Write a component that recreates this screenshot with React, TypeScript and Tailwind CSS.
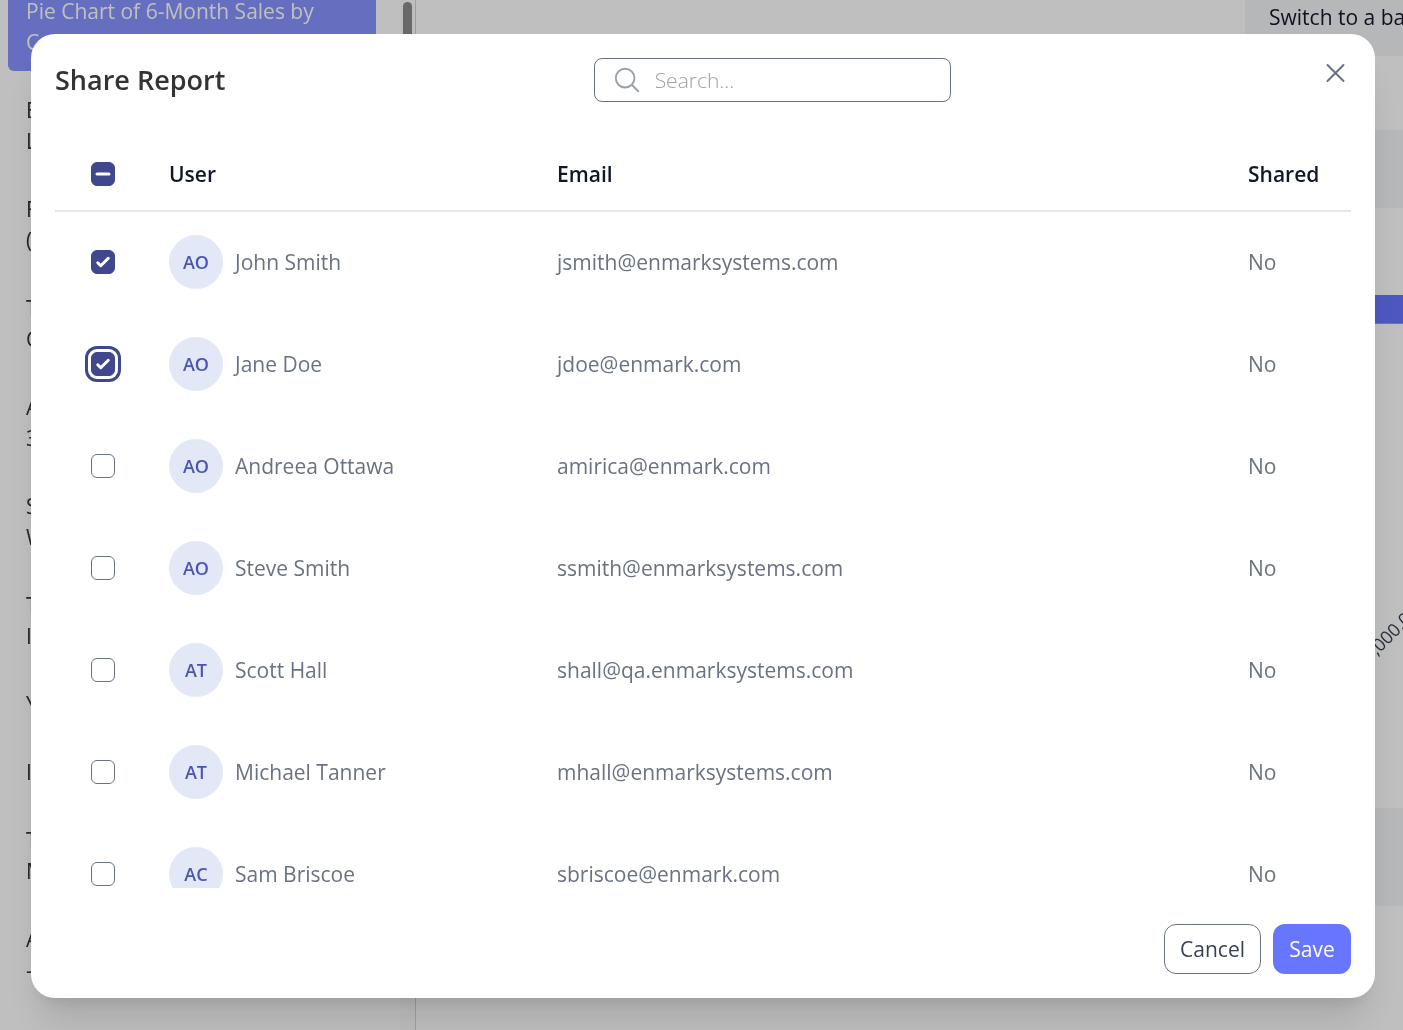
import { useState } from "react";

type User = {
  initials: string;
  name: string;
  email: string;
  shared: boolean;
};

const USERS: User[] = [
  { initials: "AO", name: "John Smith", email: "jsmith@enmarksystems.com", shared: false },
  { initials: "AO", name: "Jane Doe", email: "jdoe@enmark.com", shared: false },
  { initials: "AO", name: "Andreea Ottawa", email: "amirica@enmark.com", shared: false },
  { initials: "AO", name: "Steve Smith", email: "ssmith@enmarksystems.com", shared: false },
  { initials: "AT", name: "Scott Hall", email: "shall@qa.enmarksystems.com", shared: false },
  { initials: "AT", name: "Michael Tanner", email: "mhall@enmarksystems.com", shared: false },
  { initials: "AC", name: "Sam Briscoe", email: "sbriscoe@enmark.com", shared: false },
];

const REPORTS: string[][] = [
  ["Pie Chart of 6-Month Sales by", "C"],
  ["E", "L"],
  ["F", "("],
  ["T", "C"],
  ["A", "3"],
  ["S", "W"],
  ["T", "I"],
  ["Y"],
  ["I"],
  ["T", "M"],
  ["A", "-"],
];

function Checkbox({
  label,
  checked,
  indeterminate = false,
  focused = false,
  onChange,
}: {
  label: string;
  checked: boolean;
  indeterminate?: boolean;
  focused?: boolean;
  onChange: () => void;
}) {
  const filled = checked || indeterminate;
  return (
    <span className="relative block size-6">
      <input
        type="checkbox"
        aria-label={label}
        checked={checked}
        ref={(el) => {
          if (el) el.indeterminate = indeterminate;
        }}
        onChange={onChange}
        className={`block size-6 appearance-none rounded-md border outline-none ${
          filled ? "border-[#3f478d] bg-[#3f478d]" : "border-gray-500 bg-white"
        } ${focused ? "ring-3 ring-[#3f478d] ring-offset-3" : ""}`}
      />
      {filled && (
        <svg viewBox="0 0 16 16" className="pointer-events-none absolute inset-0 size-6" aria-hidden="true">
          {indeterminate ? (
            <path d="M4 8h8" stroke="white" strokeWidth="2" strokeLinecap="round" />
          ) : (
            <path
              d="M12.207 4.793a1 1 0 010 1.414l-5 5a1 1 0 01-1.414 0l-2-2a1 1 0 011.414-1.414L6.5 9.086l4.293-4.293a1 1 0 011.414 0z"
              fill="white"
            />
          )}
        </svg>
      )}
    </span>
  );
}

function Sidebar() {
  return (
    <aside className="w-[416px] shrink-0 overflow-hidden border-r border-gray-300 flex">
      <ul className="-mt-[19px] flex-1 flex flex-col gap-[9px] pl-2 pr-6">
        {REPORTS.map((lines, i) => (
          <li
            key={i}
            className={`shrink-0 rounded-md px-[18px] pt-[15px] pb-[13px] leading-[31px] whitespace-nowrap ${
              i === 0 ? "bg-[#8893ff] text-white" : "text-[#333333]"
            }`}
          >
            {lines.map((line) => (
              <div key={line}>{line}</div>
            ))}
          </li>
        ))}
      </ul>
      <div className="w-[15px] bg-[#fcfcfc] px-[3px] pt-[2px]">
        <div className="h-60 rounded-full bg-[#8b8b8b]" />
      </div>
    </aside>
  );
}

function ReportView() {
  return (
    <main className="min-w-0 flex-1 overflow-hidden flex flex-col">
      <div className="flex justify-end">
        <div className="h-14 w-[158px] overflow-hidden whitespace-nowrap bg-gray-100 pl-6 leading-[34px] text-gray-900">
          Switch to a ba
        </div>
      </div>
      <div className="mt-[74px] h-[78px] shrink-0 bg-gray-100" />
      <div className="mt-[87px] h-[29px] shrink-0 border-b border-gray-400 bg-[#6875ff]" />
      <div className="flex h-[484px] shrink-0 justify-end">
        <svg viewBox="0 0 80 484" className="h-full w-20" aria-hidden="true">
          <text
            x="54"
            y="332"
            transform="rotate(-45 54 332)"
            fontSize="18"
            fill="#374151"
          >
            ,000.00
          </text>
        </svg>
      </div>
      <div className="h-[98px] shrink-0 bg-gray-100" />
    </main>
  );
}

export default function App() {
  const [selected, setSelected] = useState<number[]>([0, 1]);
  const [query, setQuery] = useState("");

  const allSelected = selected.length === USERS.length;

  const toggle = (i: number) =>
    setSelected((prev) =>
      prev.includes(i) ? prev.filter((x) => x !== i) : [...prev, i]
    );

  return (
    <div className="relative h-screen overflow-hidden bg-white font-['Open_Sans',sans-serif] text-[21px] leading-[33px]">
      <div className="flex h-full will-change-transform">
        <Sidebar />
        <ReportView />
      </div>

      <div className="absolute inset-0 flex bg-black/25 pt-[34px] pr-7 pb-8 pl-[31px]">
        <div
          role="dialog"
          aria-labelledby="share-title"
          className="flex min-w-0 flex-1 flex-col rounded-3xl bg-white p-6 shadow-[0_30px_38px_-8px_rgba(0,0,0,0.12),0_12px_15px_-9px_rgba(0,0,0,0.1)]"
        >
          <div className="flex items-start justify-between">
            <h2 id="share-title" className="text-[27px] leading-[44px] font-semibold text-[#333333]">
              Share Report
            </h2>
            <label className="flex h-11 w-[357px] items-center rounded-lg border border-gray-500 pl-[17px]">
              <svg viewBox="0 0 24 24" className="size-[30px] shrink-0 text-gray-400" fill="none" stroke="currentColor" strokeWidth="1.5" strokeLinecap="round" aria-hidden="true">
                <path d="m21 21-5.197-5.197m0 0A7.5 7.5 0 1 0 5.196 5.196a7.5 7.5 0 0 0 10.607 10.607Z" />
              </svg>
              <input
                type="text"
                aria-label="Search"
                placeholder="Search..."
                value={query}
                onChange={(e) => setQuery(e.target.value)}
                className="ml-[13px] min-w-0 flex-1 font-light outline-none placeholder:text-[#a0a0a0]"
              />
            </label>
            <button type="button" aria-label="Close" className="h-[30px] w-8 text-gray-500">
              <svg viewBox="0 0 32 30" className="h-[30px] w-8" fill="none" stroke="currentColor" strokeWidth="2" strokeLinecap="round">
                <path d="M8.500 7l16 16M24.500 7l-16 16" />
              </svg>
            </button>
          </div>

          <div className="mt-9 min-h-0 flex-1 overflow-hidden">
            <table className="w-full table-fixed border-collapse text-left">
              <thead>
                <tr className="h-[73px] border-b-2 border-gray-200 text-gray-900">
                  <th className="w-[114px] pl-9">
                    <Checkbox
                      label="Select all users"
                      checked={allSelected}
                      indeterminate={selected.length > 0 && !allSelected}
                      onChange={() => setSelected(allSelected ? [] : USERS.map((_, i) => i))}
                    />
                  </th>
                  <th className="w-[388px] font-semibold">User</th>
                  <th className="font-semibold">Email</th>
                  <th className="w-[103px] font-semibold">Shared</th>
                </tr>
              </thead>
              <tbody>
                {USERS.map((user, i) => (
                  <tr key={user.email} className="h-[102px] text-gray-500 first:[&>td]:pb-px">
                    <td className="pl-9">
                      <Checkbox
                        label={`Select ${user.name}`}
                        checked={selected.includes(i)}
                        focused={i === 1}
                        onChange={() => toggle(i)}
                      />
                    </td>
                    <td>
                      <div className="flex items-center gap-3">
                        <span className="flex size-[54px] items-center justify-center rounded-full bg-[#e3e8f7] text-lg font-semibold text-[#4b55b0]">
                          {user.initials}
                        </span>
                        {user.name}
                      </div>
                    </td>
                    <td>{user.email}</td>
                    <td>{user.shared ? "Yes" : "No"}</td>
                  </tr>
                ))}
              </tbody>
            </table>
          </div>

          <div className="mt-9 flex justify-end gap-3">
            <button type="button" className="h-[50px] rounded-xl border border-gray-500 px-[15px] text-gray-700">
              Cancel
            </button>
            <button type="button" className="h-[50px] min-w-[78px] rounded-xl bg-[#6875ff] px-4 text-white">
              Save
            </button>
          </div>
        </div>
      </div>
    </div>
  );
}
